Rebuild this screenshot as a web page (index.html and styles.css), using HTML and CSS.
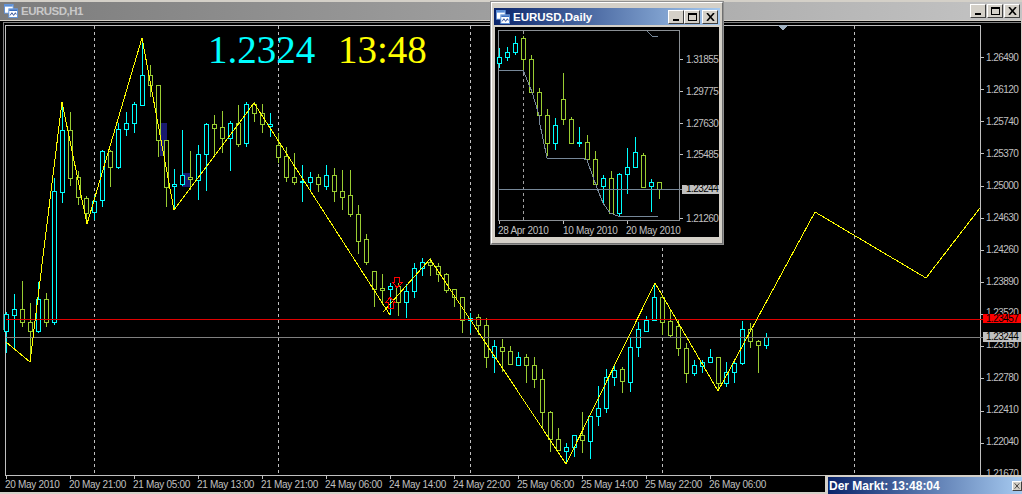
FILE: index.html
```html
<!DOCTYPE html>
<html lang="en">
<head>
<meta charset="utf-8">
<title>EURUSD</title>
<link rel="stylesheet" href="styles.css">
</head>
<body>
<div class="window main-window">
  <div class="titlebar inactive">
    <svg class="app-icon" viewBox="0 0 16 16"><use href="#icon"/></svg>
    <span class="title">EURUSD,H1</span>
    <div class="buttons">
      <span class="btn"><i class="min"></i></span><span class="btn"><i class="max"></i></span><span class="btn"><svg viewBox="0 0 9 8"><path d="M1 0L8 8M8 0L1 8"/></svg></span>
    </div>
  </div>
  <svg id="main-chart" class="chart" width="1021" height="471" viewBox="0 21 1021 471">
    <g id="main-candles"></g>
    <text class="big cyan" x="208" y="63">1.2324</text>
    <text class="big yellow" x="338" y="63">13:48</text>
    <text class="axis" x="5" y="488">20 May 2010</text>
    <text class="axis" x="69" y="488">20 May 21:00</text>
    <text class="axis" x="133" y="488">21 May 05:00</text>
    <text class="axis" x="197" y="488">21 May 13:00</text>
    <text class="axis" x="261" y="488">21 May 21:00</text>
    <text class="axis" x="325" y="488">24 May 06:00</text>
    <text class="axis" x="389" y="488">24 May 14:00</text>
    <text class="axis" x="453" y="488">24 May 22:00</text>
    <text class="axis" x="517" y="488">25 May 06:00</text>
    <text class="axis" x="581" y="488">25 May 14:00</text>
    <text class="axis" x="645" y="488">25 May 22:00</text>
    <text class="axis" x="709" y="488">26 May 06:00</text>
    <text class="axis num" x="986" y="61">1.26490</text>
    <text class="axis num" x="986" y="93">1.26120</text>
    <text class="axis num" x="986" y="125">1.25740</text>
    <text class="axis num" x="986" y="157">1.25370</text>
    <text class="axis num" x="986" y="189">1.25000</text>
    <text class="axis num" x="986" y="221">1.24630</text>
    <text class="axis num" x="986" y="253">1.24260</text>
    <text class="axis num" x="986" y="285">1.23890</text>
    <text class="axis num" x="986" y="316">1.23520</text>
    <text class="axis num" x="986" y="348">1.23150</text>
    <text class="axis num" x="986" y="381">1.22780</text>
    <text class="axis num" x="986" y="413">1.22410</text>
    <text class="axis num" x="986" y="445">1.22040</text>
    <text class="axis num" x="986" y="477">1.21670</text>
    <rect class="tag-red" x="983" y="314" width="39" height="9"/>
    <text class="axis num dark" x="986" y="322">1.23457</text>
    <rect class="tag-grey" x="983" y="332" width="39" height="10"/>
    <text class="axis num dark" x="986" y="340">1.23244</text>
  </svg>
</div>

<div class="window daily-window">
  <div class="titlebar active">
    <svg class="app-icon" viewBox="0 0 16 16"><use href="#icon"/></svg>
    <span class="title">EURUSD,Daily</span>
    <div class="buttons">
      <span class="btn"><i class="min"></i></span><span class="btn"><i class="max"></i></span><span class="btn gap"><svg viewBox="0 0 9 8"><path d="M1 0L8 8M8 0L1 8"/></svg></span>
    </div>
  </div>
  <svg id="daily-chart" class="chart" width="224" height="210" viewBox="495 27 224 210">
    <g id="daily-candles"></g>
    <text class="axis num" x="686" y="63">1.31855</text>
    <text class="axis num" x="686" y="95">1.29775</text>
    <text class="axis num" x="686" y="127">1.27630</text>
    <text class="axis num" x="686" y="158">1.25485</text>
    <rect class="tag-grey" x="682" y="185" width="37" height="9"/>
    <text class="axis num dark" x="686" y="192">1.23244</text>
    <text class="axis num" x="686" y="222">1.21260</text>
    <text class="axis" x="498" y="234">28 Apr 2010</text>
    <text class="axis" x="563" y="234">10 May 2010</text>
    <text class="axis" x="626" y="234">20 May 2010</text>
  </svg>
</div>

<div class="market-bar">
  <span class="market-text">Der Markt: 13:48:04</span>
  <span class="btn small"><svg viewBox="0 0 9 8"><path d="M1 0L8 8M8 0L1 8"/></svg></span>
</div>

<svg class="defs" width="0" height="0">
  <symbol id="icon" viewBox="0 0 16 16">
    <rect x="0.5" y="0.5" width="10" height="10" fill="#fff" stroke="#5a8fd8"/>
    <rect x="1" y="1" width="9" height="2" fill="#5a8fd8"/>
    <rect x="5.5" y="5.5" width="10" height="10" fill="#fff" stroke="#5a8fd8"/>
    <rect x="6" y="6" width="9" height="2" fill="#3a6fc0"/>
    <path d="M7 13l2-3 2 3 2-3 1 2" fill="none" stroke="#1a3c8c"/>
  </symbol>
</svg>
<script src="chart.js"></script>
</body>
</html>
```
FILE: styles.css
```css
html, body {
  margin: 0;
  padding: 0;
  background: #000;
  width: 1022px;
  height: 494px;
  overflow: hidden;
  position: relative;
  font-family: "Liberation Sans", Arial, sans-serif;
}

.window {
  background: #d4d0c8;
  box-sizing: border-box;
}

.main-window {
  padding-top: 2px;
  height: 494px;
  overflow: hidden;
}

.titlebar {
  display: flex;
  align-items: center;
  height: 18px;
  padding: 0 2px 0 4px;
  gap: 3px;
}

.titlebar.inactive {
  background: linear-gradient(90deg, #7c7c7c, #c4c4c4);
  color: #c8c8c8;
}

.titlebar.active {
  background: linear-gradient(90deg, #0a246a, #a6caf0);
  color: #fff;
}

.title {
  font-size: 11.5px;
  font-weight: 700;
  line-height: 18px;
}

.main-window .title {
  letter-spacing: -0.5px;
}

.app-icon {
  width: 14px;
  height: 14px;
  flex: none;
}

.buttons {
  margin-left: auto;
  display: flex;
  gap: 1px;
}

.btn {
  width: 16px;
  height: 14px;
  box-sizing: border-box;
  background: #d4d0c8;
  border: 1px solid;
  border-color: #fff #404040 #404040 #fff;
  display: flex;
  align-items: center;
  justify-content: center;
  position: relative;
}

.btn.gap {
  margin-left: 2px;
}

.btn svg {
  width: 9px;
  height: 8px;
}

.btn path {
  stroke: #000;
  stroke-width: 1.6;
  fill: none;
}

.btn .min {
  position: absolute;
  left: 4px;
  bottom: 2px;
  width: 6px;
  height: 2px;
  background: #000;
}

.btn .max {
  width: 9px;
  height: 8px;
  border: 1px solid #000;
  border-top-width: 2px;
  box-sizing: border-box;
}

.chart {
  display: block;
  background: #000;
  shape-rendering: crispEdges;
}

.main-window .chart {
  margin-top: 1px;
}

.daily-window {
  position: absolute;
  left: 491px;
  top: 2px;
  width: 232px;
  height: 242px;
  padding: 5px 2px 2px;
  border: 1px solid;
  border-color: #fff #707070 #707070 #fff;
  outline: 1px solid #909090;
}

.daily-window .titlebar {
  height: 17px;
  margin-bottom: 2px;
  padding-left: 2px;
}

.daily-window .buttons {
  gap: 0;
}

.daily-window .chart {
  margin-left: 1px;
}

.market-bar {
  position: absolute;
  right: 0;
  bottom: 0;
  width: 197px;
  height: 19px;
  box-sizing: border-box;
  border-top: 2px solid #d4d0c8;
  border-left: 3px solid #d4d0c8;
  background: linear-gradient(90deg, #0a246a, #a6caf0);
  display: flex;
  align-items: center;
  justify-content: space-between;
  padding: 0 0 0 1px;
}

.market-text {
  color: #fff;
  font-size: 12px;
  font-weight: 700;
  white-space: nowrap;
}

.btn.small {
  width: 10px;
  height: 10px;
}

.btn.small svg {
  width: 6px;
  height: 6px;
}

.btn.small path {
  stroke-width: 1;
}

.axis {
  font-family: "Liberation Sans", Arial, sans-serif;
  font-size: 10px;
  fill: #c0c0c0;
  letter-spacing: -0.3px;
}

.axis.num {
  letter-spacing: -0.55px;
}

.axis.dark {
  fill: #000;
}

.big {
  font-family: "Liberation Serif", "Times New Roman", serif;
  font-size: 39px;
}

.cyan { fill: #00ffff; }
.yellow { fill: #ffff00; }

.tag-red { fill: #ff0000; }
.tag-grey { fill: #c0c0c0; }

.frame { fill: none; stroke: #c0c0c0; }
.frame-daily { fill: none; stroke: #8a8f94; }
.edge { stroke: #808080; }
.tick { stroke: #c0c0c0; }
.grid { stroke: #c0c0c0; stroke-dasharray: 3 3; }
.grid-daily { stroke: #a0a0a0; stroke-dasharray: 3 3; }
.hline-red { stroke: #e00000; }
.hline-grey { stroke: #808080; }
.hline-slate { stroke: #778899; }
.wick-up { fill: #00ffff; }
.wick-down { fill: #9acd32; }
.body-up { fill: #000; stroke: #00ffff; }
.body-down { fill: #000; stroke: #9acd32; }
.zigzag { fill: none; stroke: #ffff00; }
.ma-line { fill: none; stroke: #778899; }
.zone { fill: #191970; }
.arrow { fill: none; stroke: #ff0000; }
.marker { fill: #a0b0c0; }

.defs { position: absolute; }
```
FILE: chart.js
```js
const NS = 'http://www.w3.org/2000/svg';

function el(parent, name, cls, attrs) {
  const node = document.createElementNS(NS, name);
  if (cls) node.setAttribute('class', cls);
  for (const key in attrs) node.setAttribute(key, attrs[key]);
  parent.appendChild(node);
  return node;
}

function line(parent, cls, x1, y1, x2, y2) {
  el(parent, 'line', cls, { x1, y1, x2, y2 });
}

function candle(parent, x, [dir, high, top, bottom, low]) {
  const d = dir ? 'up' : 'down';
  el(parent, 'rect', 'wick-' + d, { x, y: high, width: 1, height: Math.max(low - high, 1) });
  el(parent, 'rect', 'body-' + d, { x: x - 1.5, y: top + 0.5, width: 4, height: Math.max(bottom - top, 1) });
}

/* 1 = rising candle, 0 = falling: [dir, high, bodyTop, bodyBottom, low], one per 8px */
const hourly = [
  [1,312,314,331,353],[1,294,309,315,349],[0,281,309,322,327],[0,303,322,331,362],
  [1,282,299,331,333],[0,293,299,322,327],[1,178,191,322,325],[1,107,130,192,203],
  [0,112,130,178,186],[0,171,177,197,205],[0,196,198,213,222],[1,196,201,212,220],
  [1,150,151,200,207],[0,150,151,167,187],[1,123,129,167,169],[1,112,123,129,136],
  [1,102,104,123,133],[1,38,75,105,105],[0,65,75,85,97],[0,85,85,140,157],
  [0,140,140,187,207],[1,169,184,186,210],[1,130,175,184,186],[0,151,177,179,190],
  [1,145,154,180,200],[1,123,124,154,191],[0,115,124,128,157],[0,111,127,138,153],
  [1,121,123,138,171],[0,105,123,144,147],[1,102,104,143,147],[0,102,104,113,122],
  [0,104,113,124,133],[1,113,124,126,137],[0,133,145,157,163],[0,147,156,177,182],
  [0,153,177,182,185],[1,165,181,182,202],[1,172,177,182,191],[0,174,177,184,192],
  [1,165,175,186,190],[0,168,175,191,202],[0,170,191,197,210],[0,170,195,214,217],
  [0,205,214,241,254],[0,234,239,262,265],[0,271,271,289,307],[0,274,288,290,305],
  [1,283,286,289,315],[0,283,286,302,316],[1,284,291,302,318],[1,263,268,291,298],
  [1,258,262,268,276],[0,258,262,265,276],[0,263,266,274,282],[0,273,274,290,293],
  [0,289,289,297,307],[0,297,297,320,333],[1,313,318,320,333],[0,314,317,325,335],
  [0,318,325,357,368],[1,340,346,357,373],[0,339,347,351,372],[0,346,351,364,365],
  [1,352,357,365,366],[0,354,357,365,383],[0,357,365,379,388],[0,369,379,412,429],
  [0,411,412,439,452],[0,428,439,450,451],[1,443,447,451,463],[1,435,435,447,457],
  [0,412,435,440,453],[1,416,416,441,459],[1,386,408,416,426],[1,369,377,408,413],
  [1,366,370,377,386],[0,367,369,381,393],[1,337,347,382,392],[1,322,329,347,357],
  [1,316,320,331,331],[1,283,297,320,321],[0,297,297,322,335],[0,310,321,335,337],
  [0,320,326,348,356],[0,343,348,373,383],[1,360,365,373,376],[1,360,362,366,373],
  [1,349,357,362,363],[0,357,357,383,391],[1,362,372,383,387],[1,361,363,372,383],
  [1,321,329,363,365],[0,323,329,341,348],[0,340,341,345,373],[1,333,337,345,349]
];

const daily = [
  [1,48,57,63,68],[1,47,52,57,61],[1,36,43,52,55],[0,36,38,59,70],[0,55,59,92,93],
  [0,88,92,115,117],[0,109,115,143,156],[1,118,125,143,150],[0,73,99,119,125],
  [0,117,119,143,143],[1,127,142,143,147],[0,135,142,159,162],[0,151,159,184,185],
  [1,175,178,186,203],[0,171,178,213,213],[1,173,174,213,216],[1,148,167,174,194],
  [1,137,152,167,168],[0,153,155,187,188],[1,179,182,186,212],[0,182,182,189,199]
];

function drawMain() {
  const g = document.getElementById('main-candles');
  line(g, 'edge', 3.5, 22, 3.5, 330);
  line(g, 'edge', 3, 22.5, 1021, 22.5);
  el(g, 'rect', 'frame', { x: 5.5, y: 25.5, width: 975, height: 450 });
  [94, 278, 470, 662, 854].forEach(x => line(g, 'grid', x + 0.5, 26, x + 0.5, 475));
  el(g, 'rect', 'zone', { x: 160, y: 123, width: 7, height: 33 });
  el(g, 'rect', 'zone', { x: 182, y: 173, width: 8, height: 14 });
  hourly.forEach((c, i) => candle(g, 6 + i * 8, c));
  line(g, 'hline-red', 6, 319.5, 983, 319.5);
  line(g, 'hline-grey', 6, 337.5, 983, 337.5);
  el(g, 'polyline', 'zigzag', { points: '6,342 30,362 62,102 87,224 142,38 174,210 254,103 390,315' });
  el(g, 'polyline', 'zigzag', { points: '383,312 430,259 566,464 655,283 718,391 815,212 926,278 980,208' });
  el(g, 'polygon', 'arrow', { points: '394.5,277.5 399.5,277.5 399.5,282.5 402.5,282.5 397,287.5 392.5,282.5 394.5,282.5' });
  el(g, 'polygon', 'arrow', { points: '390,297.5 395.5,302.5 393.5,302.5 393.5,308.5 388.5,308.5 388.5,302.5 385.5,302.5' });
  el(g, 'polygon', 'marker', { points: '778,25 788,25 783,31' });
  for (let x = 6; x <= 710; x += 64) line(g, 'tick', x + 0.5, 476, x + 0.5, 479);
  for (let y = 57; y < 476; y += 32.15) line(g, 'tick', 981, Math.round(y) + 0.5, 984, Math.round(y) + 0.5);
}

function drawDaily() {
  const g = document.getElementById('daily-candles');
  el(g, 'rect', 'frame-daily', { x: 498.5, y: 30.5, width: 181, height: 190 });
  line(g, 'grid-daily', 523.5, 31, 523.5, 220);
  daily.forEach((c, i) => candle(g, 499 + i * 8, c));
  line(g, 'hline-slate', 499, 189.5, 682, 189.5);
  el(g, 'polyline', 'ma-line', { points: '499,70 523,70 532,92 539,115 539,120 547,158 582,158 587,160 597,188 603,203 610,213 618,216 658,216' });
  el(g, 'polyline', 'ma-line', { points: '647,31 652,36 658,36' });
  [59, 91, 123, 154, 218].forEach(y => line(g, 'tick', 680, y + 0.5, 683, y + 0.5));
  [499, 563, 627].forEach(x => line(g, 'tick', x + 0.5, 221, x + 0.5, 224));
}

drawMain();
drawDaily();
```
